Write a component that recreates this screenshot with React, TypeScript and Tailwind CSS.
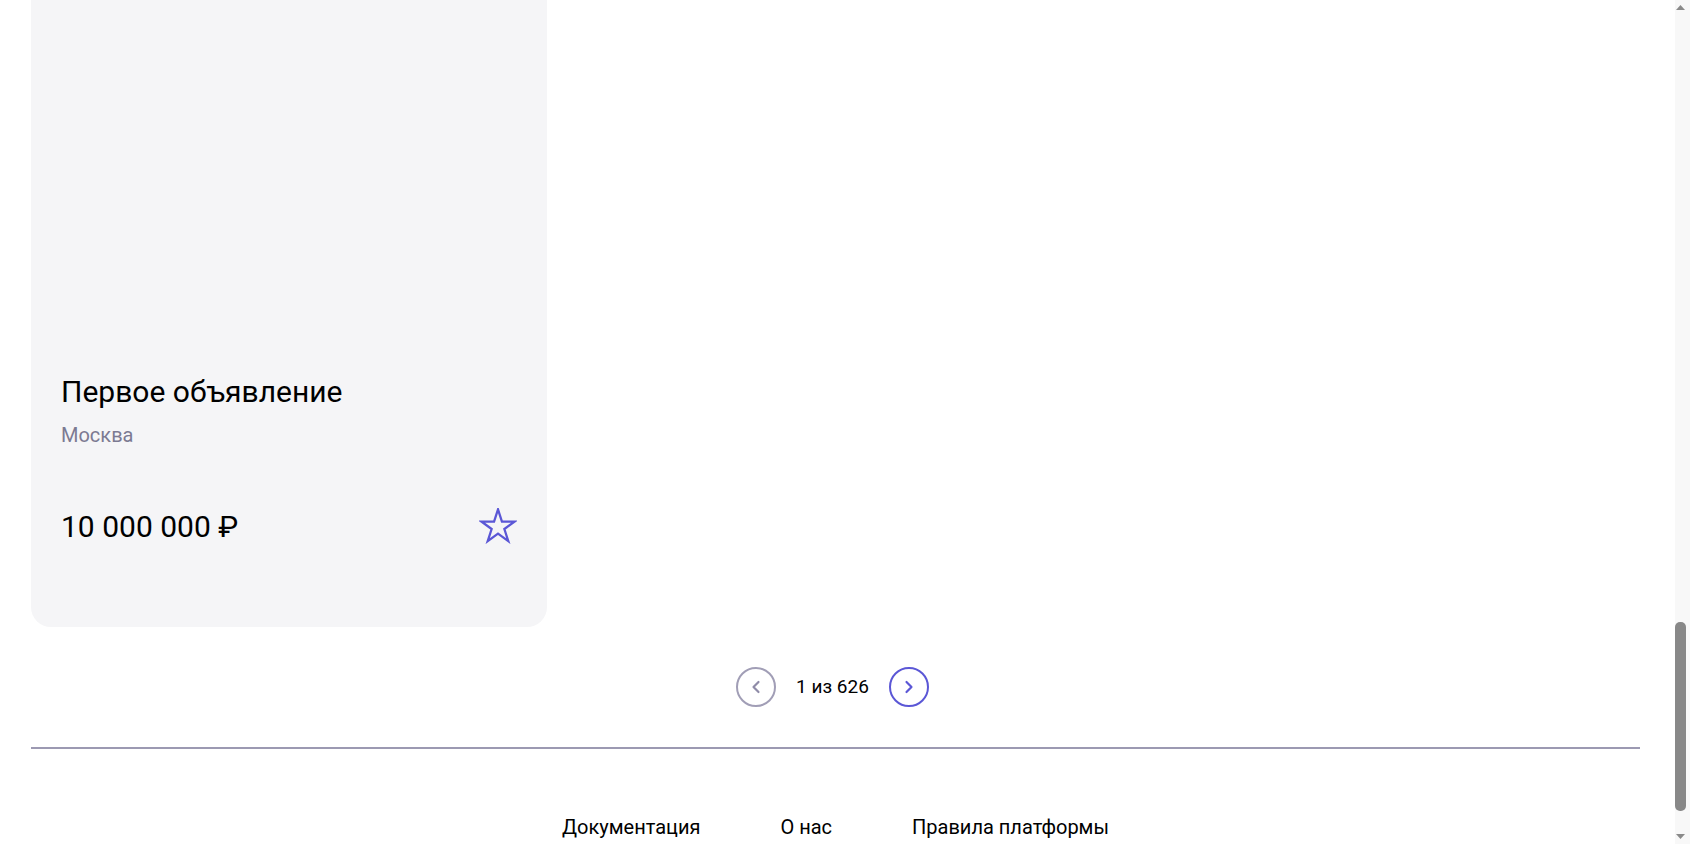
import { ChevronLeft, ChevronRight } from 'lucide-react'

type Ad = {
  id: number
  title: string
  city: string
  price: string
}

const ads: Ad[] = Array.from({ length: 10 }, (_, i) => ({
  id: i + 1,
  title: 'Первое объявление',
  city: 'Москва',
  price: '10 000 000 ₽'
}))

// the page is shown scrolled down: only the last row (one card) is in view
const visibleAds = ads.slice(9)

const StarIcon = () => (
  <svg viewBox="0 0 40 38" className="h-[36px] w-[38px]" fill="none">
    <polygon
      points="20,1.5 24.16,14.28 37.59,14.28 26.72,22.18 30.87,34.97 20,27.07 9.13,34.97 13.28,22.18 2.41,14.28 15.84,14.28"
      stroke="#5b57d6"
      strokeWidth="2.4"
      strokeLinejoin="miter"
    />
  </svg>
)

const AdCard = ({ ad }: { ad: Ad }) => (
  <div className="flex h-[760px] flex-col rounded-[20px] bg-[#f5f5f7] px-[30px] pb-[80px]">
    <div className="flex-1" />
    <div className="text-[30px] leading-[36px] text-black">{ad.title}</div>
    <div className="mt-[13px] text-[20px] leading-[24px] text-[#7c7a92]">{ad.city}</div>
    <div className="mt-[60px] flex h-[40px] items-center justify-between">
      <span className="text-[30px] leading-[40px] text-black">{ad.price}</span>
      <button className="mt-[-2px]">
        <StarIcon />
      </button>
    </div>
  </div>
)

const Pagination = ({ page, total }: { page: number; total: number }) => (
  <div className="flex shrink-0 items-center justify-center gap-5 py-10 pr-[6px]">
    <button className="flex size-10 items-center justify-center rounded-full border-2 border-[#a19eb6] text-[#8f8ba8]">
      <ChevronLeft size={20} strokeWidth={2.6} />
    </button>
    <span className="text-[19px] leading-[28px] text-black">
      {page} из {total}
    </span>
    <button className="flex size-10 items-center justify-center rounded-full border-2 border-[#5b57d6] text-[#5b57d6]">
      <ChevronRight size={20} strokeWidth={2.6} />
    </button>
  </div>
)

const ScrollBar = () => (
  <div className="flex w-[15px] shrink-0 flex-col bg-[#f8f8f8] pr-[4px]">
    <div className="flex h-[15px] items-center justify-center">
      <svg viewBox="0 0 9 5" className="h-[5px] w-[9px]">
        <polygon points="4.5,0 9,5 0,5" fill="#8a8a8a" />
      </svg>
    </div>
    <div className="flex flex-1 flex-col justify-end pb-[18px]">
      <div className="h-[189px] rounded-[5px] bg-[#888888]" />
    </div>
    <div className="flex h-[15px] items-center justify-center">
      <svg viewBox="0 0 9 5" className="h-[5px] w-[9px]">
        <polygon points="0,0 9,0 4.5,5" fill="#8a8a8a" />
      </svg>
    </div>
  </div>
)

export default function App() {
  return (
    <div className="flex h-screen overflow-hidden bg-white font-['Roboto',sans-serif]">
      <main className="flex min-w-0 flex-1 flex-col justify-end pl-[31px] pr-[35px]">
        <div className="grid shrink-0 grid-cols-3 gap-[30px]">
          {visibleAds.map((ad) => (
            <AdCard key={ad.id} ad={ad} />
          ))}
        </div>

        <Pagination page={1} total={626} />

        <div className="h-[2px] shrink-0 bg-[#9c99b2]" />

        <footer className="flex shrink-0 justify-center gap-20 pt-16 pb-[3px] text-[20px] leading-[28px] text-black">
          <a href="#">Документация</a>
          <a href="#">О нас</a>
          <a href="#">Правила платформы</a>
        </footer>
      </main>
      <ScrollBar />
    </div>
  )
}
